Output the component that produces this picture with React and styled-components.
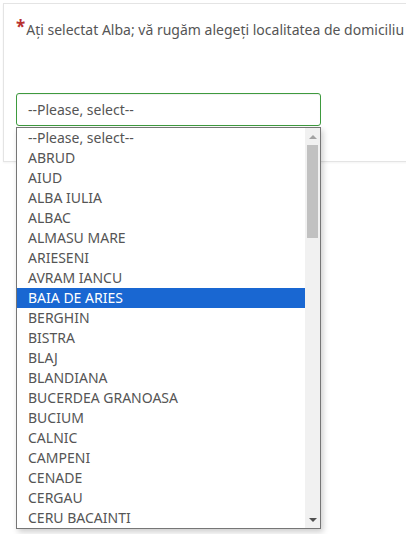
import React from "react";
import styled, { createGlobalStyle } from "styled-components";

const GlobalStyle = createGlobalStyle`
  html, body {
    margin: 0;
    padding: 0;
    background: #fff;
  }
  body {
    font-family: "Noto Sans", "Open Sans", sans-serif;
  }
`;

const localities = [
  "--Please, select--",
  "ABRUD",
  "AIUD",
  "ALBA IULIA",
  "ALBAC",
  "ALMASU MARE",
  "ARIESENI",
  "AVRAM IANCU",
  "BAIA DE ARIES",
  "BERGHIN",
  "BISTRA",
  "BLAJ",
  "BLANDIANA",
  "BUCERDEA GRANOASA",
  "BUCIUM",
  "CALNIC",
  "CAMPENI",
  "CENADE",
  "CERGAU",
  "CERU BACAINTI",
];

function App() {
  return (
    <Page>
      <GlobalStyle />
      <Card>
        <Label>
          <Star>*</Star>
          Ați selectat Alba; vă rugăm alegeți localitatea de domiciliu
        </Label>
        <Field>
          <Select>--Please, select--</Select>
          <Dropdown>
            <Options>
              {localities.map((name) => (
                <Option key={name} $active={name === "BAIA DE ARIES"}>
                  {name}
                </Option>
              ))}
            </Options>
            <Scrollbar>
              <Arrow $up />
              <Track>
                <Thumb />
              </Track>
              <Arrow />
            </Scrollbar>
          </Dropdown>
        </Field>
      </Card>
    </Page>
  );
}

const Page = styled.div`
  width: 100vw;
  height: 100vh;
  overflow: hidden;
  position: relative;
`;

const Card = styled.div`
  margin: 3px 0 0 3px;
  width: 440px;
  height: 159px;
  border: 1px solid #e4e4e4;
  box-sizing: border-box;
  padding: 14px 0 0 12px;
  box-shadow: 0 1px 2px rgba(0, 0, 0, 0.05);
`;

const Label = styled.div`
  display: flex;
  align-items: flex-start;
  font-size: 14px;
  line-height: 24px;
  color: #555;
  white-space: nowrap;
`;

const Star = styled.span`
  color: #b8312f;
  font-size: 17px;
  font-weight: bold;
  line-height: 17px;
  margin-right: 1px;
`;

const Field = styled.div`
  position: relative;
  margin-top: 51px;
  width: 305px;
`;

const Select = styled.div`
  height: 33px;
  box-sizing: border-box;
  border: 1px solid #3e9a3e;
  border-radius: 3px;
  padding: 0 11px;
  display: flex;
  align-items: center;
  font-size: 14px;
  color: #555;
  box-shadow: inset 0 1px 1px rgba(0, 0, 0, 0.06);
`;

const Dropdown = styled.div`
  position: absolute;
  top: 34px;
  left: 0;
  width: 305px;
  height: 402px;
  box-sizing: border-box;
  border: 1px solid #767676;
  background: #fff;
  display: flex;
  box-shadow: 2px 3px 6px rgba(0, 0, 0, 0.2);
  z-index: 2;
`;

const Options = styled.div`
  flex: 1;
  display: flex;
  flex-direction: column;
  overflow: hidden;
`;

const Option = styled.div`
  height: 20px;
  flex-shrink: 0;
  line-height: 20px;
  padding-left: 11px;
  font-size: 14px;
  white-space: nowrap;
  color: ${(p) => (p.$active ? "#fff" : "#555")};
  background: ${(p) => (p.$active ? "#1967d2" : "transparent")};
`;

const Scrollbar = styled.div`
  width: 15px;
  background: #f1f1f1;
  display: flex;
  flex-direction: column;
`;

const Arrow = styled.div`
  height: 17px;
  display: flex;
  align-items: center;
  justify-content: center;
  &::after {
    content: "";
    width: 0;
    height: 0;
    border-left: 4px solid transparent;
    border-right: 4px solid transparent;
    ${(p) =>
      p.$up
        ? "border-bottom: 4px solid #a3a3a3;"
        : "border-top: 4px solid #505050;"}
  }
`;

const Track = styled.div`
  flex: 1;
  padding: 0 2px;
`;

const Thumb = styled.div`
  height: 93px;
  background: #c1c1c1;
`;

export default App;
